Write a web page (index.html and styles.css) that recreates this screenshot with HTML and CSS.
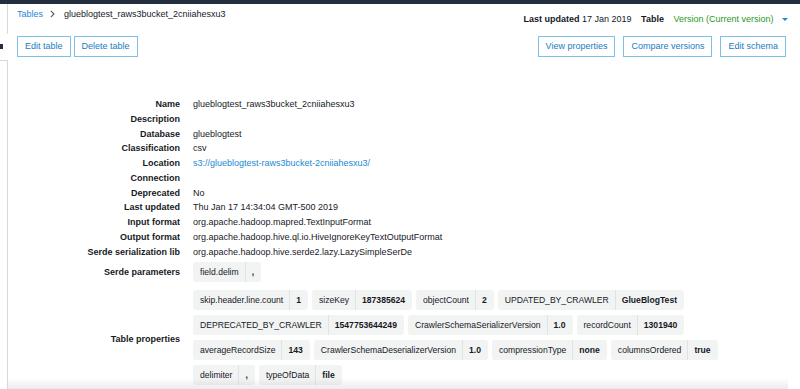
FILE: index.html
```html
<!DOCTYPE html>
<html lang="en">
<head>
    <meta charset="UTF-8">
    <title>glueblogtest_raws3bucket_2cniiahesxu3</title>
    <link rel="stylesheet" href="styles.css">
</head>
<body>
    <div class="topbar"></div>
    <div class="page">
        <div class="sidebar">
            <div class="toggle"><span class="grip"></span></div>
        </div>

        <div class="main">
            <div class="header">
                <div class="crumbs">
                    <a class="link" href="#">Tables</a>
                    <svg class="chev" width="5" height="8" viewBox="0 0 5 8"><polyline points="0.8,0.8 4,4 0.8,7.2" fill="none" stroke="#545b64" stroke-width="1.1"/></svg>
                    <span>glueblogtest_raws3bucket_2cniiahesxu3</span>
                </div>
                <div class="meta">
                    <b>Last updated</b> 17 Jan 2019
                    <b class="meta-table">Table</b>
                    <span class="version">Version (Current version)</span>
                    <span class="caret"></span>
                </div>
            </div>

            <div class="actions">
                <div class="btns">
                    <button class="btn">Edit table</button>
                    <button class="btn">Delete table</button>
                </div>
                <div class="btns right">
                    <button class="btn">View properties</button>
                    <button class="btn">Compare versions</button>
                    <button class="btn">Edit schema</button>
                </div>
            </div>

            <div class="details">
                <div class="label">Name</div><div class="value">glueblogtest_raws3bucket_2cniiahesxu3</div>
                <div class="label">Description</div><div class="value"></div>
                <div class="label">Database</div><div class="value">glueblogtest</div>
                <div class="label">Classification</div><div class="value">csv</div>
                <div class="label">Location</div><div class="value"><a class="link" href="#">s3://glueblogtest-raws3bucket-2cniiahesxu3/</a></div>
                <div class="label">Connection</div><div class="value"></div>
                <div class="label">Deprecated</div><div class="value">No</div>
                <div class="label">Last updated</div><div class="value">Thu Jan 17 14:34:04 GMT-500 2019</div>
                <div class="label">Input format</div><div class="value">org.apache.hadoop.mapred.TextInputFormat</div>
                <div class="label">Output format</div><div class="value">org.apache.hadoop.hive.ql.io.HiveIgnoreKeyTextOutputFormat</div>
                <div class="label">Serde serialization lib</div><div class="value">org.apache.hadoop.hive.serde2.lazy.LazySimpleSerDe</div>

                <div class="label mid serde">Serde parameters</div>
                <div class="tags serde">
                    <span class="tag"><span class="k">field.delim</span><span class="v">,</span></span>
                </div>

                <div class="label mid props">Table properties</div>
                <div class="tags props">
                    <span class="tag"><span class="k">skip.header.line.count</span><span class="v">1</span></span>
                    <span class="tag"><span class="k">sizeKey</span><span class="v">187385624</span></span>
                    <span class="tag"><span class="k">objectCount</span><span class="v">2</span></span>
                    <span class="tag"><span class="k">UPDATED_BY_CRAWLER</span><span class="v">GlueBlogTest</span></span>
                    <span class="tag"><span class="k">DEPRECATED_BY_CRAWLER</span><span class="v">1547753644249</span></span>
                    <span class="tag"><span class="k">CrawlerSchemaSerializerVersion</span><span class="v">1.0</span></span>
                    <span class="tag"><span class="k">recordCount</span><span class="v">1301940</span></span>
                    <span class="tag"><span class="k">averageRecordSize</span><span class="v">143</span></span>
                    <span class="tag"><span class="k">CrawlerSchemaDeserializerVersion</span><span class="v">1.0</span></span>
                    <span class="tag"><span class="k">compressionType</span><span class="v">none</span></span>
                    <span class="tag"><span class="k">columnsOrdered</span><span class="v">true</span></span>
                    <span class="tag"><span class="k">delimiter</span><span class="v">,</span></span>
                    <span class="tag"><span class="k">typeOfData</span><span class="v">file</span></span>
                </div>
            </div>
        </div>
    </div>
    <div class="fade"></div>
</body>
</html>
```

FILE: styles.css
```css
body {
    margin: 0;
    font-family: "Liberation Sans", Arial, sans-serif;
    font-size: 9px;
    color: #16191f;
    background: #fff;
    overflow: hidden;
}

.topbar {
    height: 4px;
    background: #232f3e;
}

.page {
    display: flex;
    height: 385px;
}

.sidebar {
    position: relative;
    width: 7px;
    flex-shrink: 0;
    border-right: 1px solid #d5dbdb;
}
.toggle {
    position: absolute;
    top: 30px;
    left: 0;
    width: 8px;
    height: 26px;
    background: #fff;
    border-bottom: 1px solid #d5dbdb;
}
.toggle .grip {
    position: absolute;
    top: 10px;
    left: 0;
    width: 3px;
    height: 5px;
    background: #232f3e;
}

.main {
    flex: 1;
    padding: 3px 14px 0 9px;
}

.link {
    color: #1b8ad3;
    text-decoration: none;
}

.header {
    display: flex;
    justify-content: space-between;
    align-items: flex-start;
    line-height: 14px;
}
.crumbs {
    display: flex;
    align-items: center;
}
.crumbs .chev {
    margin: 0 9px 0 7px;
}
.meta {
    margin-top: 5px;
    margin-right: -2px;
}
.meta-table {
    margin-left: 7px;
}
.version {
    color: #1f9a24;
    margin-left: 7px;
}
.caret {
    display: inline-block;
    margin-left: 6px;
    border-left: 3px solid transparent;
    border-right: 3px solid transparent;
    border-top: 3px solid #1b8ad3;
    vertical-align: middle;
}

.actions {
    display: flex;
    justify-content: space-between;
    margin-top: 10px;
}
.btns {
    display: flex;
    gap: 3px;
}
.btns.right {
    gap: 8px;
}
.btn {
    font-family: inherit;
    font-size: 9px;
    color: #1a7cc0;
    background: #fff;
    border: 1px solid #7fc0e8;
    border-radius: 0;
    height: 21px;
    padding: 0 7px;
    line-height: 19px;
    cursor: pointer;
}

.details {
    display: grid;
    grid-template-columns: 163px 1fr;
    column-gap: 13px;
    margin-top: 40px;
    line-height: 14.75px;
}
.label {
    font-weight: bold;
    text-align: right;
}
.label.mid {
    align-self: center;
}
.value {
    min-height: 14.75px;
}
.serde {
    margin-top: 3px;
}
.props {
    margin-top: 8px;
}
.label.props {
    padding-top: 4px;
}
.tags.props {
    margin-right: 30px;
}

.tags {
    display: flex;
    flex-wrap: wrap;
    gap: 5px 4px;
}
.tag {
    display: inline-flex;
    height: 20px;
    line-height: 20px;
    font-size: 8.6px;
    background: #f2f3f3;
    border-radius: 3px;
}
.tag .k {
    padding: 0 6px 0 7px;
}
.tag .v {
    padding: 0 7px 0 6px;
    font-weight: bold;
    border-left: 1px solid #e1e3e3;
}

.fade {
    position: absolute;
    left: 8px;
    right: 12px;
    bottom: 0;
    height: 11px;
    background: linear-gradient(rgba(0, 0, 0, 0), rgba(0, 0, 0, 0.08));
    pointer-events: none;
}
```
